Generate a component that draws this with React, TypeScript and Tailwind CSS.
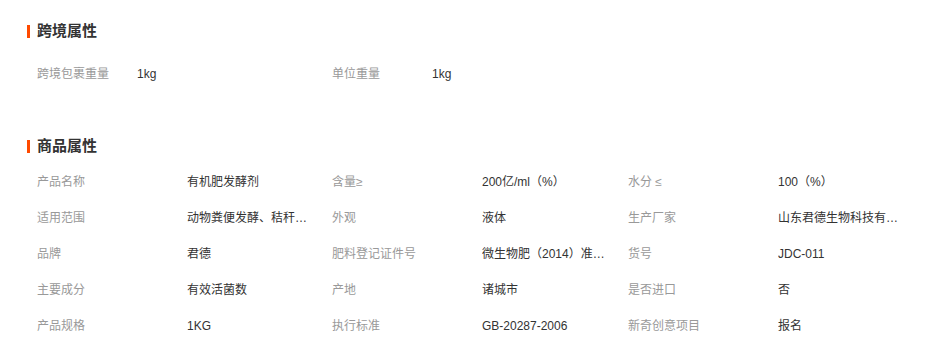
const crossBorder = [
  { label: '跨境包裹重量', value: '1kg' },
  { label: '单位重量', value: '1kg' },
];

const attrs: [string, string][] = [
  ['产品名称', '有机肥发酵剂'],
  ['含量≥', '200亿/ml（%）'],
  ['水分 ≤', '100（%）'],
  ['适用范围', '动物粪便发酵、秸秆腐熟、堆肥'],
  ['外观', '液体'],
  ['生产厂家', '山东君德生物科技有限公司'],
  ['品牌', '君德'],
  ['肥料登记证件号', '微生物肥（2014）准字（1234）号'],
  ['货号', 'JDC-011'],
  ['主要成分', '有效活菌数'],
  ['产地', '诸城市'],
  ['是否进口', '否'],
  ['产品规格', '1KG'],
  ['执行标准', 'GB-20287-2006'],
  ['新奇创意项目', '报名'],
];

function SectionTitle({ title }: { title: string }) {
  return (
    <div className="flex items-center h-[23px]">
      <span className="w-[3px] h-[13px] bg-[#ff4a00]" />
      <span className="ml-[7px] text-[15px] font-bold text-[#333]">{title}</span>
    </div>
  );
}

export default function App() {
  return (
    <div className="w-[941px] h-[355px] bg-white pl-[27px] pt-[20px] font-['Liberation_Sans','Noto_Sans_CJK_SC',sans-serif] text-[12px] overflow-hidden">
      <SectionTitle title="跨境属性" />
      <div className="flex items-center h-[36px] mt-[13px] pl-[10px]">
        {crossBorder.map((item, i) => (
          <div key={i} className="flex items-center w-[295px]">
            <span className="w-[100px] text-[#999]">{item.label}</span>
            <span className="text-[#333]">{item.value}</span>
          </div>
        ))}
      </div>

      <div className="mt-[43px]">
        <SectionTitle title="商品属性" />
      </div>
      <div className="mt-[6px] pl-[10px] grid grid-cols-[150px_145px_150px_146px_150px_146px]">
        {attrs.map(([label, value], i) => (
          <div key={i} className="contents">
            <div className="h-[36px] flex items-center text-[#999] whitespace-nowrap">{label}</div>
            <div className="h-[36px] flex items-center">
              <span className="w-[126px] truncate text-[#333]">{value}</span>
            </div>
          </div>
        ))}
      </div>
    </div>
  );
}
